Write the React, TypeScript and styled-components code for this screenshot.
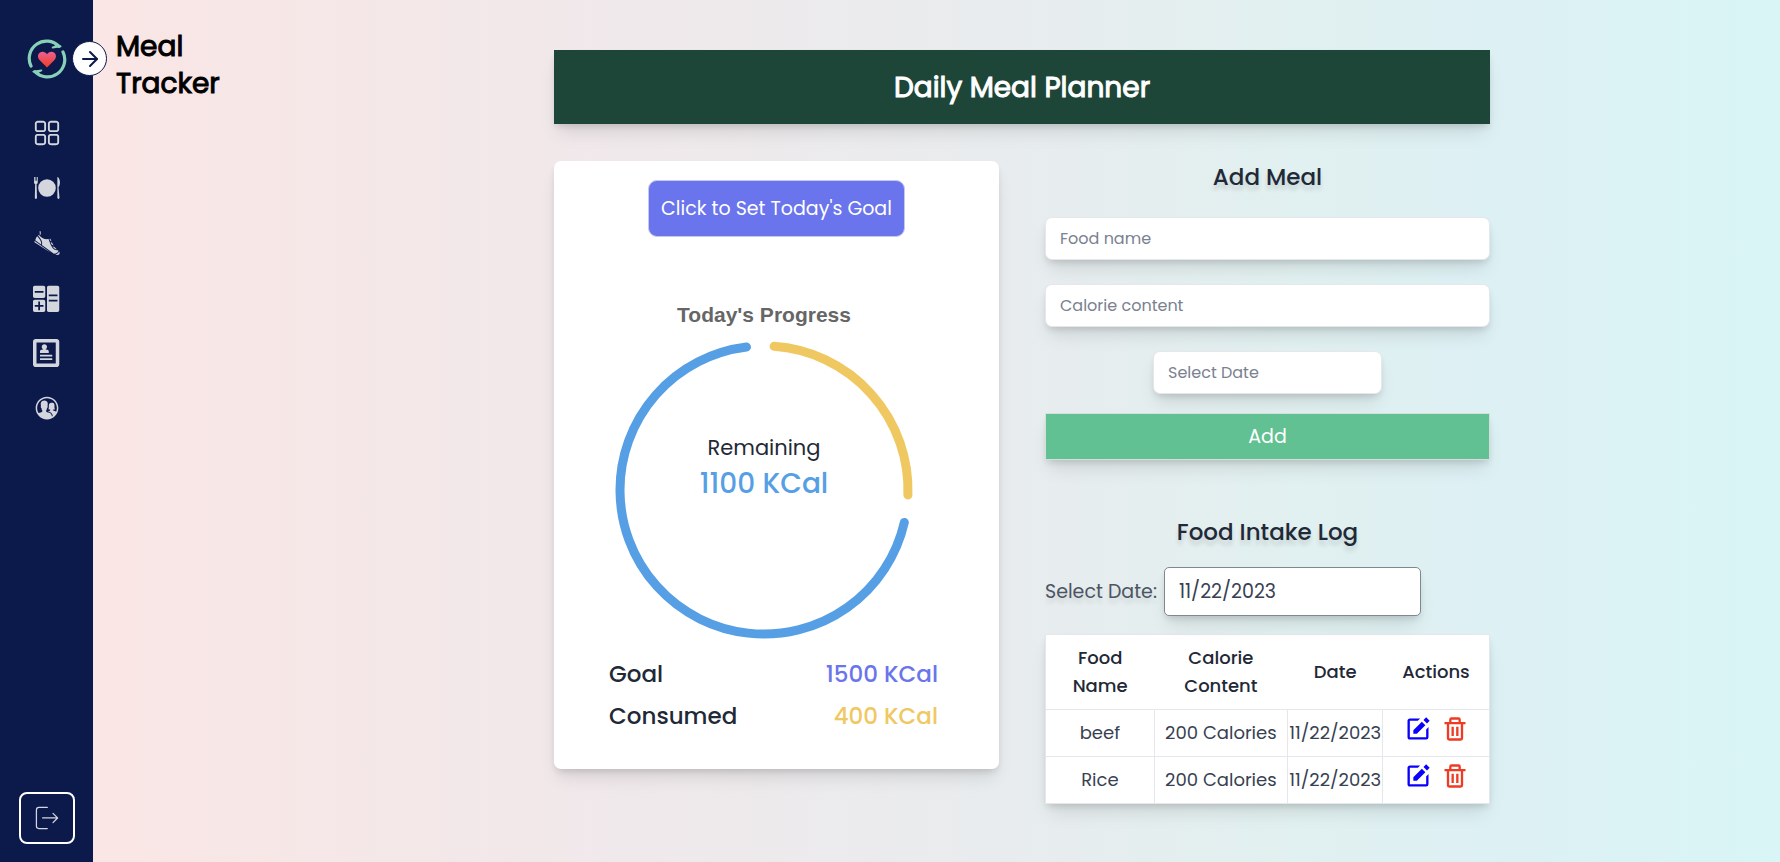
import React from "react";
import styled, { createGlobalStyle, css } from "styled-components";
import { ArrowRight } from "lucide-react";
import { BiSolidEdit, BiTrash } from "react-icons/bi";
import { CiLogout } from "react-icons/ci";
import { GiMeal, GiRunningShoe } from "react-icons/gi";
import { ImCalculator, ImProfile } from "react-icons/im";
import { IoIosContacts } from "react-icons/io";
import { RxDashboard } from "react-icons/rx";

const navy = "#0c194b";
const ink = "#1f2937";
const blue = "#569fe5";
const yellow = "#f0c862";
const indigo = "#6a74ec";
const boxShadow =
  "0 12px 18px -4px rgba(0, 0, 0, 0.1), 0 4px 7px -2px rgba(0, 0, 0, 0.14)";

/* Regular letterforms thickened by an outline in the text's own colour. */
const strong = css`
  font-weight: 400;
  -webkit-text-stroke: 1px currentColor;
`;

const GlobalStyle = createGlobalStyle`
  *, *::before, *::after { box-sizing: border-box; }
  body {
    margin: 0;
    color: ${ink};
    font-family: Poppins, Inter, "Liberation Sans", sans-serif;
    font-size: 18px;
    line-height: 28px;
  }
  h1, h2, h3, p { margin: 0; }
  button, input { font: inherit; }
`;

const Page = styled.div`
  display: flex;
  min-height: 100vh;
  background: linear-gradient(
    90deg,
    #fae6e5 5%,
    #f1e8ea 31%,
    #e8ecee 57%,
    #e1f0f0 73%,
    #ddf0f4 84%,
    #d9f5f5 100%
  );
`;

const Sidebar = styled.aside`
  position: relative;
  flex: 0 0 93px;
  display: flex;
  flex-direction: column;
  align-items: center;
  padding: 39px 0 18px;
  background: ${navy};
`;

const Nav = styled.nav`
  display: flex;
  flex-direction: column;
  gap: 27px;
  margin-top: 40px;
`;

const NavLink = styled.a`
  display: flex;
  color: #d3d7dd;
`;

const Toggle = styled.button`
  position: absolute;
  top: 41px;
  right: -14px;
  display: grid;
  place-items: center;
  width: 35px;
  height: 35px;
  padding: 0;
  border: 1px solid ${navy};
  border-radius: 50%;
  background: #fff;
  color: ${navy};
`;

const LogoutButton = styled.button`
  display: grid;
  place-items: center;
  width: 56px;
  height: 52px;
  margin-top: auto;
  padding: 0;
  border: 2px solid #fff;
  border-radius: 8px;
  background: transparent;
  color: #d3d7dd;

  svg { transform: rotate(180deg); }
`;

const PageTitle = styled.h1`
  ${strong}
  flex: 0 0 171px;
  padding: 28px 20px 0 23px;
  color: #000;
  font-size: 28px;
  line-height: 37px;
`;

const Main = styled.main`
  flex: 1;
  max-width: 936px;
  margin: 0 auto;
  padding: 50px 0 40px;
`;

const Banner = styled.h2`
  ${strong}
  padding: 19px 18px 17px;
  background: #1d4638;
  box-shadow: ${boxShadow};
  color: #fff;
  font-size: 28px;
  line-height: 38px;
  text-align: center;
`;

const Columns = styled.div`
  display: grid;
  grid-template-columns: 1fr 1fr;
  align-items: start;
  gap: 46px;
  margin-top: 37px;
`;

const Card = styled.section`
  display: flex;
  flex-direction: column;
  padding: 19px 55px 32px;
  border-radius: 7px;
  background: #fff;
  box-shadow: ${boxShadow};
`;

const GoalButton = styled.button`
  align-self: center;
  height: 57px;
  padding: 0 12px;
  border: 1px solid #c5c9ee;
  border-radius: 9px;
  background: ${indigo};
  color: #fff;
  font-size: 19px;
`;

const Progress = styled.div`
  display: grid;
  max-width: 310px;
  margin-top: 66px;
`;

const ProgressTitle = styled.h3`
  margin-bottom: 8px;
  color: #666;
  font-family: Helvetica, "Liberation Sans", sans-serif;
  font-size: 21px;
  font-weight: 700;
  line-height: 24px;
  text-align: center;
`;

const Ring = styled.svg`
  grid-area: 2 / 1;
  width: 100%;
  height: auto;
`;

const RingLabel = styled.div`
  grid-area: 2 / 1;
  align-self: center;
  padding-bottom: 48px;
  text-align: center;
  line-height: 36px;
`;

const RingCaption = styled.p`
  font-size: 21px;
`;

const RingValue = styled.p`
  color: ${blue};
  font-size: 28px;
  font-weight: 500;
`;

const Totals = styled.dl`
  max-width: 329px;
  margin: 8px 0 0;
  font-size: 23px;
  font-weight: 500;
  line-height: 42px;
`;

const Total = styled.div`
  display: flex;
  justify-content: space-between;
`;

const TotalValue = styled.dd<{ $color: string }>`
  margin: 0;
  color: ${(p) => p.$color};
`;

const SectionTitle = styled.h3`
  font-size: 23px;
  font-weight: 500;
  line-height: 32px;
  text-align: center;
  text-shadow: 0 5px 4px rgba(0, 0, 0, 0.12);
`;

const MealForm = styled.form`
  display: flex;
  flex-direction: column;
  gap: 24px;
  margin-top: 24px;
`;

const Field = styled.input<{ $narrow?: boolean }>`
  align-self: center;
  width: ${(p) => (p.$narrow ? "229px" : "100%")};
  height: 43px;
  padding: 0 14px;
  border: 1px solid #e5e7eb;
  border-radius: 7px;
  background: #fff;
  box-shadow: ${boxShadow};
  color: ${ink};
  font-size: 16px;

  &::placeholder { color: #7a8190; opacity: 1; }
`;

const AddButton = styled.button`
  height: 47px;
  margin-top: -5px;
  border: 1px solid #d5dfdc;
  background: #61c192;
  box-shadow: ${boxShadow};
  color: #fff;
  font-size: 19px;
`;

const LogSection = styled.section`
  margin-top: 56px;
`;

const DateFilter = styled.div`
  display: flex;
  align-items: center;
  gap: 7px;
  margin: 19px 0 18px;
  color: #4b5563;
  font-size: 19px;
  text-shadow: 0 5px 4px rgba(0, 0, 0, 0.1);
`;

const DateInput = styled.input`
  width: 257px;
  height: 49px;
  padding: 0 14px;
  border: 1px solid #7f8793;
  border-radius: 5px;
  background: #fff;
  box-shadow: ${boxShadow};
  color: #374151;
`;

const LogTable = styled.table`
  width: 100%;
  border: 1px solid #e5e7eb;
  border-collapse: collapse;
  table-layout: fixed;
  background: #fff;
  box-shadow: ${boxShadow};
  text-align: center;
`;

const HeadCell = styled.th<{ $width: string }>`
  width: ${(p) => p.$width};
  height: 75px;
  padding: 9px 0;
  font-weight: 500;
`;

const Cell = styled.td`
  height: 47px;
  padding: 0;
  border: 1px solid #e5e7eb;
  color: #374151;
  white-space: nowrap;
`;

const Actions = styled.div`
  display: flex;
  justify-content: center;
  gap: 9px;
  padding-bottom: 8px;
`;

const IconButton = styled.button<{ $color: string }>`
  display: flex;
  padding: 0;
  border: 0;
  background: none;
  color: ${(p) => p.$color};
`;

const navItems = [
  { label: "Dashboard", icon: RxDashboard },
  { label: "Meals", icon: GiMeal },
  { label: "Exercise", icon: GiRunningShoe },
  { label: "Calculator", icon: ImCalculator },
  { label: "Profile", icon: ImProfile },
  { label: "Community", icon: IoIosContacts },
];

const meals = [
  { name: "beef", calories: 200, date: "11/22/2023" },
  { name: "Rice", calories: 200, date: "11/22/2023" },
];

/** Arc on a circle centred in the 310-unit ring, angles clockwise from the top. */
function arc(from: number, to: number, r = 144) {
  const at = (deg: number) => {
    const a = (deg * Math.PI) / 180;
    return `${155 + r * Math.sin(a)} ${155 - r * Math.cos(a)}`;
  };
  return `M${at(from)}A${r} ${r} 0 ${to - from > 180 ? 1 : 0} 1 ${at(to)}`;
}

function Logo() {
  return (
    <svg width="40" height="40" viewBox="0 0 40 40" fill="none" role="img" aria-label="Health logo">
      <defs>
        <linearGradient id="heart" x1="0" y1="0" x2="0" y2="1">
          <stop offset="0" stopColor="#ea5f92" />
          <stop offset="1" stopColor="#ee3f22" />
        </linearGradient>
      </defs>
      <g stroke="#86d1b7" strokeWidth="3.2" strokeLinecap="round" strokeLinejoin="round">
        <path d="M4 27A17.3 17.3 0 0 1 32 7.4" />
        <path d="M36 13A17.3 17.3 0 0 1 8 32.6" />
      </g>
      <g fill="#86d1b7" stroke="#86d1b7" strokeWidth="1.6" strokeLinejoin="round">
        <path d="M28 4.5L33.800 7.400L25.500 8.600L29 7Z" />
        <path d="M12 35.500L6.200 32.600L14.500 31.400L11 33Z" />
      </g>
      <path
        fill="url(#heart)"
        d="M20 28.500L12.300 20.800C10.400 18.600 10.600 15.200 12.900 13.600C15.400 12 18.600 12.800 20 15.200C21.400 12.800 24.600 12 27.100 13.600C29.400 15.200 29.600 18.600 27.700 20.800Z"
      />
    </svg>
  );
}

export default function App() {
  return (
    <>
      <GlobalStyle />
      <Page>
        <Sidebar>
          <Logo />
          <Toggle type="button" aria-label="Expand menu">
            <ArrowRight size={24} />
          </Toggle>
          <Nav>
            {navItems.map(({ label, icon: Icon }) => (
              <NavLink key={label} href="#" aria-label={label}>
                <Icon size={28} />
              </NavLink>
            ))}
          </Nav>
          <LogoutButton type="button" aria-label="Log out">
            <CiLogout size={30} />
          </LogoutButton>
        </Sidebar>

        <PageTitle>Meal Tracker</PageTitle>

        <Main>
          <Banner>Daily Meal Planner</Banner>
          <Columns>
            <Card>
              <GoalButton type="button">Click to Set Today's Goal</GoalButton>
              <Progress>
                <ProgressTitle>Today's Progress</ProgressTitle>
                <Ring viewBox="0 0 310 310" fill="none" strokeWidth="9" strokeLinecap="round" aria-hidden="true">
                  <path d={arc(4, 92)} stroke={yellow} />
                  <path d={arc(103, 353)} stroke={blue} />
                </Ring>
                <RingLabel>
                  <RingCaption>Remaining</RingCaption>
                  <RingValue>1100 KCal</RingValue>
                </RingLabel>
              </Progress>
              <Totals>
                <Total>
                  <dt>Goal</dt>
                  <TotalValue $color={indigo}>1500 KCal</TotalValue>
                </Total>
                <Total>
                  <dt>Consumed</dt>
                  <TotalValue $color={yellow}>400 KCal</TotalValue>
                </Total>
              </Totals>
            </Card>

            <div>
              <SectionTitle>Add Meal</SectionTitle>
              <MealForm>
                <Field type="text" placeholder="Food name" aria-label="Food name" />
                <Field type="text" placeholder="Calorie content" aria-label="Calorie content" />
                <Field $narrow type="text" placeholder="Select Date" aria-label="Select Date" />
                <AddButton type="button">Add</AddButton>
              </MealForm>

              <LogSection>
                <SectionTitle>Food Intake Log</SectionTitle>
                <DateFilter>
                  <label htmlFor="log-date">Select Date:</label>
                  <DateInput id="log-date" type="text" defaultValue="11/22/2023" />
                </DateFilter>
                <LogTable>
                  <thead>
                    <tr>
                      <HeadCell $width="24.5%">Food<br />Name</HeadCell>
                      <HeadCell $width="30%">Calorie Content</HeadCell>
                      <HeadCell $width="21.5%">Date</HeadCell>
                      <HeadCell $width="24%">Actions</HeadCell>
                    </tr>
                  </thead>
                  <tbody>
                    {meals.map((meal) => (
                      <tr key={meal.name}>
                        <Cell>{meal.name}</Cell>
                        <Cell>{meal.calories} Calories</Cell>
                        <Cell>{meal.date}</Cell>
                        <Cell>
                          <Actions>
                            <IconButton type="button" $color="#0a00fb" aria-label={`Edit ${meal.name}`}>
                              <BiSolidEdit size={28} />
                            </IconButton>
                            <IconButton type="button" $color="#ef3a24" aria-label={`Delete ${meal.name}`}>
                              <BiTrash size={28} />
                            </IconButton>
                          </Actions>
                        </Cell>
                      </tr>
                    ))}
                  </tbody>
                </LogTable>
              </LogSection>
            </div>
          </Columns>
        </Main>
      </Page>
    </>
  );
}
